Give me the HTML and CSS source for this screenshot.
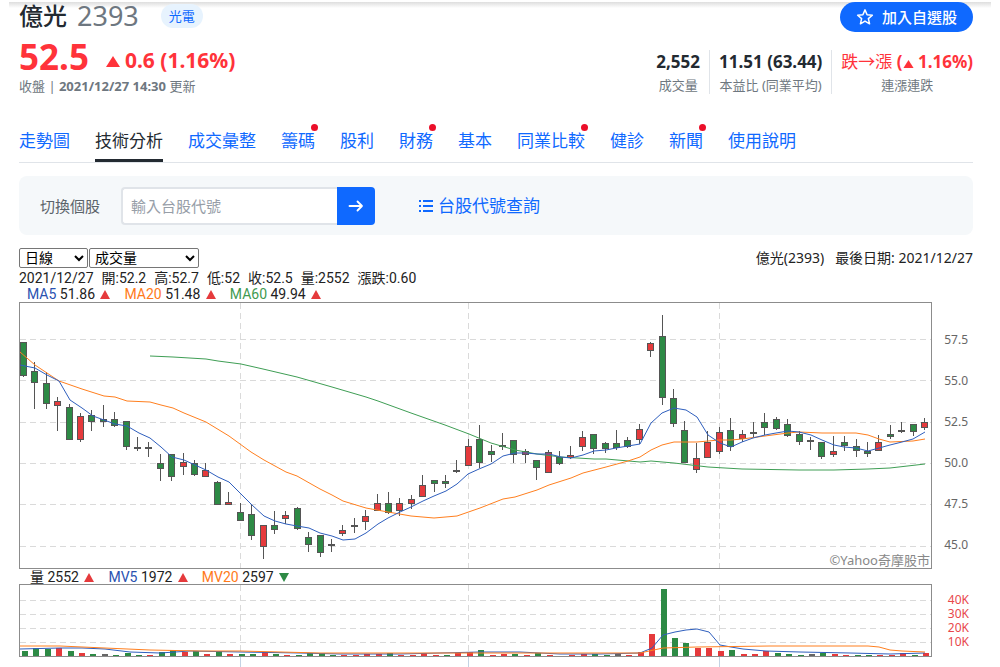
FILE: index.html
```
<!DOCTYPE html>
<html lang="zh-Hant">
<head>
<meta charset="utf-8">
<meta name="viewport" content="width=device-width, initial-scale=1">
<title>億光 2393 技術分析</title>
<link rel="stylesheet" href="styles.css">
</head>
<body>
<div class="page">
  <div class="top-shade"></div>
  <main class="content">
    <header class="quote">
      <div class="quote-left">
        <div class="name-row">
          <h1 class="name">億光</h1>
          <span class="code">2393</span>
          <a class="sector" href="#">光電</a>
        </div>
        <div class="price-row">
          <span class="price">52.5</span>
          <svg class="tri" viewBox="0 0 14 11" width="14" height="11"><path d="M7 0L14 11H0Z"/></svg>
          <span class="change">0.6 (1.16%)</span>
        </div>
        <div class="updated">收盤 | <b>2021/12/27 14:30</b> 更新</div>
      </div>
      <div class="quote-right">
        <button class="add" type="button">
          <svg viewBox="0 0 24 24" width="18" height="18"><path d="M12 2.500l2.800 6.500 7 .6-5.300 4.600 1.600 6.900L12 17.400l-6.100 3.700 1.600-6.900L2.200 9.600l7-.6z" fill="none" stroke="currentColor" stroke-width="2" stroke-linejoin="round"/></svg>
          加入自選股
        </button>
        <dl class="stats">
          <div class="stat"><dt>成交量</dt><dd>2,552</dd></div>
          <div class="stat"><dt>本益比 (同業平均)</dt><dd>11.51 (63.44)</dd></div>
          <div class="stat up"><dt>連漲連跌</dt><dd><span class="thin">跌→漲</span> (<svg class="tri-small" viewBox="0 0 14 11" width="11" height="8"><path d="M7 0L14 11H0Z"/></svg> 1.16%)</dd></div>
        </dl>
      </div>
    </header>

    <nav class="tabs">
      <a href="#">走勢圖</a>
      <a href="#" class="active" aria-current="page">技術分析</a>
      <a href="#">成交彙整</a>
      <a href="#" class="new">籌碼</a>
      <a href="#">股利</a>
      <a href="#" class="new">財務</a>
      <a href="#">基本</a>
      <a href="#" class="new">同業比較</a>
      <a href="#">健診</a>
      <a href="#" class="new">新聞</a>
      <a href="#">使用說明</a>
    </nav>

    <form class="switcher">
      <label for="symbol">切換個股</label>
      <div class="field">
        <input id="symbol" type="text" placeholder="輸入台股代號">
        <button type="button" aria-label="查詢">
          <svg viewBox="0 0 16 16" width="16" height="16"><path d="M1.500 8H14M9.500 3.500L14 8l-4.500 4.500" fill="none" stroke="currentColor" stroke-width="1.800" stroke-linecap="round" stroke-linejoin="round"/></svg>
        </button>
      </div>
      <a class="lookup" href="#">
        <svg viewBox="0 0 16 14" width="16" height="14"><path d="M1 2h2M1 7h2M1 12h2M5 2h10M5 7h10M5 12h10" stroke="currentColor" stroke-width="2"/></svg>
        台股代號查詢
      </a>
    </form>

    <section class="chart">
      <div class="chart-head">
        <div class="selects">
          <select class="period" aria-label="週期"><option>日線</option></select><select class="indicator" aria-label="指標"><option>成交量</option></select>
        </div>
        <div class="chart-title"><span>億光(2393)</span><span>最後日期: 2021/12/27</span></div>
      </div>
      <div class="ohlc"><span>2021/12/27</span><span>開:52.2</span><span>高:52.7</span><span>低:52</span><span>收:52.5</span><span>量:2552</span><span>漲跌:0.60</span></div>
      <div class="legend">
        <span><i class="c5">MA5</i> 51.86 <svg viewBox="0 0 10 9" width="10" height="9"><path class="red" d="M5 0L10 9H0Z"/></svg></span>
        <span><i class="c20">MA20</i> 51.48 <svg viewBox="0 0 10 9" width="10" height="9"><path class="red" d="M5 0L10 9H0Z"/></svg></span>
        <span><i class="c60">MA60</i> 49.94 <svg viewBox="0 0 10 9" width="10" height="9"><path class="red" d="M5 0L10 9H0Z"/></svg></span>
      </div>
      <div class="plot price-plot">
        <div class="canvas">
          <svg id="price" viewBox="19 302 913 267" preserveAspectRatio="none"></svg>
          <span class="credit">©Yahoo奇摩股市</span>
        </div>
        <div class="axis price-axis"><span>57.5</span><span>55.0</span><span>52.5</span><span>50.0</span><span>47.5</span><span>45.0</span></div>
      </div>
      <div class="legend volume-legend">
        <span>量 2552 <svg viewBox="0 0 10 9" width="10" height="9"><path class="red" d="M5 0L10 9H0Z"/></svg></span>
        <span><i class="c5">MV5</i> 1972 <svg viewBox="0 0 10 9" width="10" height="9"><path class="red" d="M5 0L10 9H0Z"/></svg></span>
        <span><i class="c20">MV20</i> 2597 <svg viewBox="0 0 10 9" width="10" height="9"><path class="green" d="M5 9L10 0H0Z"/></svg></span>
      </div>
      <div class="plot">
        <div class="canvas">
          <svg id="volume" viewBox="19 584 913 83" preserveAspectRatio="none"></svg>
        </div>
        <div class="axis volume-axis"><span>40K</span><span>30K</span><span>20K</span><span>10K</span></div>
      </div>
    </section>
  </main>
</div>
<script src="chart.js"></script>
</body>
</html>
```
FILE: styles.css
```
* { box-sizing: border-box; }
body {
  margin: 0;
  background: #fff;
  color: #232a31;
  font-family: "Noto Sans", "Noto Sans CJK TC", sans-serif;
  font-size: 14px;
  line-height: 20px;
}
h1, dl, dd { margin: 0; font-weight: 400; }
a { color: #0f69ff; text-decoration: none; }
button { border: 0; font: inherit; cursor: pointer; }
.page { padding: 2px 9px 0; height: 100vh; overflow: hidden; }
.top-shade { height: 6px; margin-bottom: -6px; background: linear-gradient(#dedede, #fff); }
.content { padding: 0 18px 0 10px; }

.quote { display: flex; justify-content: space-between; }
.name-row { display: flex; align-items: center; height: 28px; }
.name { font-size: 24px; line-height: 28px; font-weight: 500; }
.code { margin-left: 10px; font-size: 27px; line-height: 28px; color: #6e7780; }
.sector {
  margin-left: 22px;
  padding: 0 8px;
  border-radius: 12px;
  background: #e7f3fe;
  font-size: 13px;
  line-height: 24px;
}
.price-row { display: flex; align-items: center; height: 45px; padding-top: 9px; color: #ff333a; font-weight: 600; }
.price { font-size: 35px; font-weight: 700; line-height: 36px; }
.tri { margin: 8px 5px 0 17px; }
.tri, .tri-small { fill: #ff333a; }
.change { font-size: 21px; font-weight: 700; line-height: 28px; padding-top: 6px; }
.updated { margin-top: 1px; color: #6e7780; font-size: 13px; }
.updated b { font-weight: 700; }
.quote-right { display: flex; flex-direction: column; align-items: flex-end; }
.add {
  position: relative;
  display: flex;
  align-items: center;
  gap: 8px;
  height: 30px;
  padding: 0 16px;
  border-radius: 15px;
  background: #0f69ff;
  color: #fff;
  font-size: 15px;
  font-weight: 500;
}
.stats { display: flex; margin-top: 18px; }
.stat {
  display: flex;
  flex-direction: column-reverse;
  justify-content: flex-end;
  align-items: center;
  height: 44px;
  padding: 0 9px;
}
.stat + .stat { border-left: 1px solid #e0e4e9; }
.stat:last-child { padding-right: 0; }
.stat dt { color: #6e7780; font-size: 13px; line-height: 22px; }
.stat dd { font-size: 17px; font-weight: 700; line-height: 24px; }
.stat.up dd { color: #ff333a; }
.thin { font-weight: 400; }

.tabs { display: flex; gap: 25px; margin-top: 24px; border-bottom: 1px solid #e0e4e9; }
.tabs a { position: relative; height: 42px; font-size: 17px; line-height: 42px; white-space: nowrap; }
.tabs .active { color: #232a31; border-bottom: 3px solid #232a31; }
.tabs .new::after {
  content: "";
  position: absolute;
  top: 4px;
  right: -3px;
  width: 7px;
  height: 7px;
  border-radius: 50%;
  background: #eb0f29;
}

.switcher {
  display: flex;
  align-items: center;
  height: 59px;
  margin-top: 13px;
  padding-left: 21px;
  border-radius: 8px;
  background: #f5f8fa;
}
.switcher label { color: #5b636a; font-size: 15px; }
.field { display: flex; margin-left: 21px; }
.field input {
  width: 216px;
  height: 38px;
  padding: 0 8px;
  border: 2px solid #e0e4e9;
  border-right: 0;
  border-radius: 4px 0 0 4px;
  background: #fff;
  font: inherit;
  font-size: 15px;
}
.field input::placeholder { color: #979ea8; }
.field button {
  display: grid;
  place-items: center;
  width: 38px;
  height: 38px;
  padding: 0;
  border-radius: 0 4px 4px 0;
  background: #0f69ff;
  color: #fff;
}
.lookup { display: flex; align-items: center; gap: 4px; margin-left: 43px; font-size: 17px; }

.chart { margin-top: 13px; color: #222; font-family: Roboto, "Noto Sans CJK TC", sans-serif; }
.chart-head { display: flex; justify-content: space-between; height: 22px; }
.selects { display: flex; gap: 1px; }
.selects select {
  height: 20px;
  padding: 0 0 0 1px;
  border: 1px solid #767676;
  border-radius: 2px;
  background: #fff;
  color: #000;
  font: 14px/18px Roboto, "Noto Sans CJK TC", sans-serif;
}
.period { width: 69px; }
.indicator { width: 110px; }
.chart-title { display: flex; gap: 11px; font: 14px/20px "Noto Sans", "Noto Sans CJK TC", sans-serif; }
.ohlc { display: flex; gap: 8px; height: 16px; font-size: 14px; line-height: 16px; white-space: nowrap; }
.legend { display: flex; gap: 14px; height: 16px; padding-left: 8px; font-size: 14px; line-height: 16px; white-space: nowrap; }
.legend i { font-style: normal; }
.legend svg { margin-left: 2px; }
.c5 { color: #2a52b0; }
.c20 { color: #ff7a1a; }
.c60 { color: #3f9a50; }
.red { fill: #e53a3c; }
.green { fill: #2d8a45; }
.volume-legend { padding-left: 11px; height: 15px; }
.plot { display: grid; grid-template-columns: 1fr 41px; }
.canvas { position: relative; }
.canvas svg { display: block; width: 100%; height: 83px; }
.price-plot .canvas svg { height: 267px; }
.credit {
  position: absolute;
  right: 2px;
  bottom: 0;
  color: #888;
  font: 13px/18px "Noto Sans", "Noto Sans CJK TC", sans-serif;
}
.axis { display: grid; justify-content: end; align-content: start; padding-right: 5px; color: #666; font: 12px/20px "Noto Sans", sans-serif; }
.price-axis { grid-template-rows: repeat(5, 41px) 20px; padding-top: 28px; }
.volume-axis { grid-template-rows: repeat(4, 14px); padding-top: 9px; padding-right: 4px; line-height: 14px; color: #e8484c; }

.grid { stroke: #dadada; stroke-width: 1; stroke-dasharray: 6 4; fill: none; }
.frame { stroke: #8c8c8c; stroke-width: 1; fill: none; }
.tick { stroke: #c3d3e4; }
.wick { stroke: #555; stroke-width: 1; }
.body { stroke: #555; stroke-width: 1; }
.line { fill: none; stroke-width: 1; stroke-linejoin: round; }
.line5 { stroke: #2f5fbe; }
.line20 { stroke: #ff7f1f; }
.line60 { stroke: #3f9e55; }
.r { fill: #e53a3c; }
.g { fill: #2d8a45; }
.k { fill: #666; }
```
FILE: chart.js
```
// Each candle: wick top, body top, body bottom, wick bottom, colour.
const candles = `342,342,376,377,g 362,371,383,409,g 372,383,404,409,g 397,401,406,431,r 404,407,440,440,g
413,416,440,442,r 410,415,422,431,g 405,419,422,427,g 412,419,426,427,g 421,421,447,450,g
437,447,449,451,g 442,447,449,457,r 454,463,469,481,g 454,454,477,481,g 453,462,467,475,r
460,463,475,476,g 463,470,477,477,r 481,482,505,505,g 492,502,505,505,r 503,512,521,521,g
504,514,536,540,g 525,525,547,559,r 511,525,530,534,g 511,515,519,524,r 507,508,529,530,g
532,537,545,552,g 535,535,553,557,g 539,544,545,552,k 525,530,534,536,r 518,525,527,533,r
510,516,522,530,r 494,503,511,511,r 492,503,513,514,g 498,503,511,516,r 495,499,504,509,r
475,485,497,497,r 480,480,484,492,g 475,481,484,488,g 460,470,472,473,g 439,446,466,466,r
425,439,463,468,g 445,451,455,462,g 433,445,447,450,g 440,440,455,463,g 449,451,455,463,r
460,460,468,480,g 450,452,473,473,r 451,457,464,465,g 446,455,458,459,r 431,437,447,451,r
434,434,449,454,g 442,443,449,453,g 430,443,448,450,g 437,440,447,448,g 424,429,440,444,r
342,343,351,357,r 315,336,398,405,g 389,398,424,427,g 421,430,463,463,g 443,458,470,473,r
431,442,458,458,r 427,432,452,454,r 418,430,447,451,g 430,434,439,442,r 422,432,434,438,r
413,422,428,435,g 417,419,429,430,g 419,424,436,437,g 431,434,442,445,g 437,440,442,450,g
442,442,457,459,g 436,451,455,457,r 436,442,446,451,g 439,446,451,457,g 442,451,454,457,g
435,442,451,451,r 425,434,437,439,g 422,430,431,433,k 424,424,432,436,g 418,422,428,430,r`
  .split(/\s+/).map(s => s.split(','));

// Bar heights and colours, left to right.
const volumes = `5g 8g 7g 8r 5g 3r 2g 2k 1g 3g 1g 1r 4g 6g 4r 5g 2r 5g 2r 2g 2g 4r 2g 1r 1g 3g 3g 1g
1r 1r 2r 2r 3g 1r 1r 3r 1r 1g 3r 4r 6g 1r 2r 2g 1r 3g 1r 0r 1r 2r 2g 1g 2k 1r 4r 22r 67g 18g 13g 8r
8r 5r 6g 2r 2r 5r 3g 2g 1g 2k 3g 2r 1r 1g 1g 1r 1r 3r 1g 3r`.split(/\s+/);

const ma5 = '20,365 35,368 47,375 59,381 70,400 82,408 93,416 104,420 115,424 127,426 139,433 150,438 161,447 172,457 184,460 195,465 206,470 218,477 229,482 241,494 252,505 264,516 275,521 286,524 297,526 309,528 320,533 332,536 343,540 355,539 366,533 378,524 388,518 400,512 411,507 423,501 434,496 446,491 457,484 468,474 479,469 491,464 503,456 515,453 526,453 537,454 549,454 561,457 571,458 583,455 594,451 606,450 616,448 628,446 640,444 651,423 662,413 674,408 686,410 697,417 708,435 720,443 731,447 742,442 753,438 765,435 776,433 788,431 799,432 811,435 822,440 834,445 844,447 856,448 868,451 879,448 890,445 902,442 913,439 925,432';
const ma20 = '20,352 35,365 59,381 82,389 104,396 115,397 127,401 150,402 161,405 173,408 184,413 206,422 229,436 251,452 264,460 286,472 297,476 320,489 332,495 343,501 366,508 388,512 411,516 434,518 457,516 480,508 503,499 515,497 537,490 549,485 571,478 583,473 606,467 628,461 640,457 651,450 662,445 674,442 697,442 719,440 731,440 742,439 765,436 788,433 799,432 822,433 856,433 868,435 879,439 890,442 913,441 925,439';
const ma60 = '150,356 173,357 206,359 218,361 241,364 263,369 297,377 332,387 366,397 378,401 400,409 411,413 445,425 469,434 491,443 515,450 537,454 561,457 594,459 606,459 640,462 651,461 674,463 708,467 742,469 799,470 834,470 868,469 890,468 925,464';
const mv5 = '20,649 60,648 82,648 105,649 130,652 160,653 190,651 240,652 300,653 340,654 400,654 440,653 480,652 520,652 560,654 600,654 640,653 652,648 663,635 675,632 686,630 697,629 709,632 720,645 731,647 743,649 766,651 800,652 850,653 890,654 925,653';
const mv20 = '20,646 60,646 105,648 150,650 200,651 240,651 320,653 400,653 480,653 560,653 640,653 663,648 697,647 770,646 868,646 879,647 890,650 902,651 925,652';

const xAt = i => Math.round(24 + i * 901 / 79);
const hline = (y) => `<path class="grid" d="M20 ${y}H931"/>`;
const vlines = (top, bottom) => [240, 468, 719].map(x => `<path class="grid" d="M${x}.5 ${top}V${bottom}"/>`).join('');
const line = (points, cls) => `<polyline class="line ${cls}" points="${points}"/>`;

document.getElementById('price').innerHTML =
  [339.5, 380.5, 422.5, 463.5, 504.5, 546.5].map(hline).join('') + vlines(303, 568) +
  candles.map(([hi, top, bottom, lo, c], i) => {
    const x = xAt(i);
    return `<path class="wick" d="M${x - .5} ${hi}V${lo}"/>` +
      `<rect class="body ${c}" x="${x - 3.5}" y="${+top + .5}" width="6" height="${Math.max(bottom - top - 1, 1)}"/>`;
  }).join('') +
  line(ma60, 'line60') + line(ma20, 'line20') + line(ma5, 'line5') +
  '<rect class="frame" x="19.500" y="302.500" width="912" height="266"/>';

document.getElementById('volume').innerHTML =
  [600.5, 614.5, 628.5, 642.5].map(hline).join('') + vlines(585, 656) +
  [240, 468, 719].map(x => `<path class="tick" d="M${x}.5 657V667"/>`).join('') +
  volumes.map((v, i) => {
    const h = parseInt(v, 10);
    return `<rect class="${v.slice(-1)}" x="${xAt(i) - 2}" y="${656 - h}" width="6" height="${h}"/>`;
  }).join('') +
  line(mv5, 'line5') + line(mv20, 'line20') +
  '<rect class="frame" x="19.500" y="584.500" width="912" height="72"/>';
```
